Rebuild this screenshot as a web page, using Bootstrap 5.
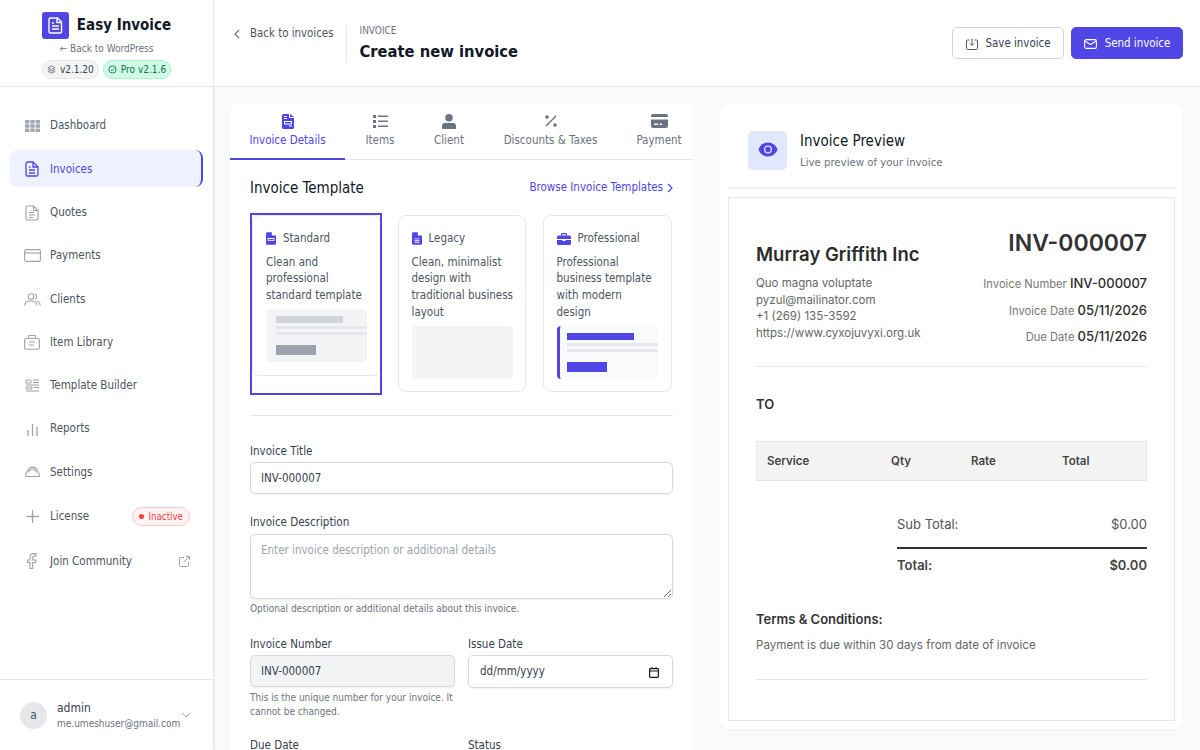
<!DOCTYPE html>
<html lang="en"><head><meta charset="utf-8"><title>Create new invoice</title>
<link href="https://cdn.jsdelivr.net/npm/bootstrap@5.3.0/dist/css/bootstrap.min.css" rel="stylesheet">
<style>
html,body{height:750px;overflow:hidden}
body{font-family:"DejaVu Sans Condensed","DejaVu Sans",sans-serif;background:#f9fafb;color:#111827;font-size:11.5px}
svg{display:block;flex:none}
.app-side{width:214px;height:750px;background:#fff;border-right:1px solid #e5e7eb;box-shadow:1px 0 2px rgba(0,0,0,.04)}
.brand-box{height:87px;border-bottom:1px solid #e5e7eb;padding-top:11px}
.logo-sq{width:27px;height:27px;background:#4f46e5;border-radius:3px}
.brand-name{font-size:15px;font-weight:700;color:#111827;line-height:28px}
.wp-link{font-size:10px;color:#6b7280;line-height:14px;margin-top:3px}
.ver-pill{font-size:10px;line-height:17px;border-radius:9px;padding:0 4px;background:#f3f4f6;border:1px solid #e5e7eb;color:#374151}
.ver-pro{background:#d1fae5;border-color:#a7f3d0;color:#047857}
.side-nav{padding:20px 10px 0}
.side-item{height:37px;margin-bottom:6.3px;padding:1px 13px 0;font-size:11.5px;color:#4b5563;border-radius:8px}
.side-item.on{background:#eef2ff;color:#4f46e5;border-right:2px solid #4f46e5}
.side-ic{width:18px;margin-right:9px;color:#9ca3af}
.side-lic{margin-top:7.300px}
.side-join{margin-top:7.500px}
.off-pill{font-size:9.7px;line-height:17px;color:#ef4444;background:#fef2f2;border:1px solid #fecaca;border-radius:10px;padding:0 6px}
.off-dot{width:5px;height:5px;border-radius:50%;background:#ef4444}
.user-box{height:71px;border-top:1px solid #e5e7eb;padding:0 22px 0 20px}
.user-ava{width:27px;height:27px;border-radius:50%;background:#e5e7eb;color:#4b5563;font-size:12px;margin-right:10px}
.user-txt{padding-top:2px}
.user-nm{font-size:12px;color:#374151;line-height:15px}
.user-ml{font-size:10px;color:#6b7280;line-height:15px;white-space:nowrap}
.top-head{height:87px;background:#fff;border-bottom:1px solid #e5e7eb;padding:0 17px 0 20px}
.back-lnk{font-size:11.4px;color:#4b5563;padding-right:13px;margin-bottom:18px;gap:10px}
.head-sep{height:37px;border-left:1px solid #e5e7eb;margin-right:12px}
.head-sm{font-size:10px;color:#6b7280;line-height:13px;margin-top:2px}
.head-h{font-size:16.400px;font-weight:700;color:#111827;line-height:26px;margin:2px 0 0}
.act-btn{height:32px;width:112px;font-size:11.4px;border-radius:5px;padding:2px 0 0}
.act-save{background:#fff;border:1px solid #d1d5db;color:#374151}
.act-send{background:#4f46e5;border:1px solid #4f46e5;color:#fff;margin-left:7px}
.work{padding:17px 17px 0 16px;gap:27px}
.panel{background:#fff;border-radius:8px;box-shadow:0 1px 2px rgba(0,0,0,.05)}
.form-pan{width:463px;height:700px;overflow:hidden}
.prev-pan{width:463px;height:625px;padding:0 8px}
.tab-row{height:56px;border-bottom:1px solid #e5e7eb}
.tab-it{height:56px;font-size:11.5px;color:#6b7280;padding:9px 0 0;line-height:15px;flex:none}
.tab-ic{height:16px;margin-bottom:4px}
.tab-on{color:#4f46e5;border-bottom:2px solid #4f46e5}
.tw-a{width:115px}.tw-b{width:70px}.tw-c{width:68px}.tw-d{width:135px}.tw-e{width:82px}
.form-in{padding:18px 20px 0}
.sec-row{margin-bottom:15px}
.sec-h{font-size:15px;color:#111827;line-height:20px}
.sec-lnk{font-size:11.5px;color:#4f46e5}
.tpl-row{margin-bottom:20px}
.tpl{border:1px solid #e5e7eb;border-radius:8px;padding:14px 11px 0 12.500px;width:128px;height:177px;font-size:11.5px;line-height:16.7px;color:#4b5563;margin-top:2px}
.tpl-wrap{width:132px;height:182px;outline:2px solid #4f46e5;outline-offset:-2px;padding:2px 1px 0 2px;margin-right:16px}
.tpl-sel{height:161px;width:129px;margin-top:0;padding-left:13px}
.tpl-mid{margin-right:17px}
.tpl-pro{width:129px;padding-right:15px}
.tpl-t{color:#4b5563;margin-bottom:6.5px;line-height:17px;gap:7px}
.thumb{height:53px;width:101px;background:#f3f4f6;border-radius:4px;margin-top:5.5px;padding-top:7px;overflow:hidden}
.thumb-pro{background:#f9fafb;border-left:3px solid #4f46e5}
.bar-a{height:7px;width:67px;margin-left:10px;background:#d1d5db}
.bar-b{height:3px;margin:3px 0 0 10px;background:#e5e7eb}
.bar-c{height:10px;width:40px;margin:10px 0 0 10px;background:#9ca3af}
.thumb-pro .bar-a,.thumb-pro .bar-b,.thumb-pro .bar-c{margin-left:7px}
.thumb-pro .bar-a,.thumb-pro .bar-c{background:#4f46e5}
.rule-x{border-top:1px solid #e5e7eb;margin:0 0 28px}
.fld-lab{font-size:11.5px;color:#374151;line-height:14px;margin-bottom:4px;display:block}
.inp{font-size:11.5px;border:1px solid #d6d9df;border-radius:5px;height:32px;padding:0 10px;color:#374151;width:100%;background:#fff;box-shadow:0 1px 2px rgba(0,0,0,.05)}
.inp::placeholder{color:#9ca3af}
.inp-gap{margin-bottom:21px}
textarea.inp{height:65px;padding:7px 10px;display:block;margin-top:5px}
.inp-dis{background:#f3f4f6}
.inp-date{height:33px;padding:1px 13px 0 11px}
.fld-help{font-size:10px;color:#6b7280;line-height:14px}
.help-a{margin-top:3px}.help-b{margin-top:4px}
.fld-row{column-gap:13px;margin-top:21px}
.fld-row2{margin-top:19px}
.fld-col{width:205px}
.inv-box{border:1px solid #e5e7eb;margin-top:8px;height:524px;padding:0 27px;font-family:Inter,"Liberation Sans",sans-serif}
.prev-head{height:85px;border-bottom:2px solid #f0f1f3;padding:10px 20px 0}
.eye-sq{width:39px;height:39px;background:#e0e7ff;border-radius:5px;margin-right:13px}
.eye-sq svg{margin-bottom:2px}
.prev-t{font-size:15px;color:#111827;line-height:22px}
.prev-s{font-size:11.3px;color:#6b7280;line-height:18px;margin-top:2px}
.co-nm{font-size:18.5px;font-weight:600;color:#2b2b2b;line-height:24px;margin-top:44px}
.co-ln{font-size:11.5px;color:#666;line-height:16.7px;margin-top:9px}
.inv-no{font-size:23px;font-weight:600;color:#333;line-height:30px;text-align:right;margin-top:30px;margin-bottom:17px}
.m-ln{font-size:11.2px;color:#777;text-align:right;line-height:17px;margin-bottom:8.7px}
.m-ln b{font-size:13px;font-weight:500;color:#2b2b2b}
.inv-rule{border-top:1px solid #e5e7eb;margin-top:11px}
.to-h{font-size:13px;font-weight:600;color:#333;margin:29px 0 29px;line-height:16px}
.it-head{height:40px;background:#f4f4f5;border:1px solid #e5e7eb;font-size:11.5px;font-weight:600;color:#444;padding:2px 0 0 10px}
.col-s{width:124px}.col-q{width:80px}.col-r{width:91px}
.tot-w{width:250px;margin:33px 0 0 auto}
.tot-a{font-size:13px;color:#555;height:22px}
.tot-b{border-top:2px solid #333;margin-top:11px;padding-top:7px;font-size:13px;font-weight:600;color:#444}
.terms-h{font-size:13px;font-weight:600;color:#333;margin-top:34px;line-height:18px}
.terms-p{font-size:11.6px;color:#666;margin-top:8px;line-height:18px}
.rule-end{margin-top:25px}
</style></head>
<body>
<div class="d-flex">
<aside class="app-side d-flex flex-column flex-shrink-0">
 <div class="brand-box text-center">
  <div class="d-flex justify-content-center align-items-center gap-2">
   <div class="logo-sq d-flex align-items-center justify-content-center"><svg width="15" height="17" viewBox="0 0 15 17" fill="none" stroke="#fff" stroke-width="1.4"><path d="M2.5 1h7l4 4v9.500a1.500 1.500 0 0 1-1.500 1.500h-9.500a1.500 1.500 0 0 1-1.500-1.500v-12a1.500 1.500 0 0 1 1.500-1.500zM9 1v4.500h4.500M4 9h7M4 12h7M4 6h2"/></svg></div>
   <div class="brand-name">Easy Invoice</div>
  </div>
  <div class="wp-link">← Back to WordPress</div>
  <div class="d-flex justify-content-center gap-1 mt-1">
   <span class="ver-pill d-flex align-items-center gap-1"><svg width="9" height="9" viewBox="0 0 10 10" fill="none" stroke="#6b7280"><path d="M5 1 9 3 5 5 1 3zM1 5l4 2 4-2M1 7l4 2 4-2"/></svg>v2.1.20</span>
   <span class="ver-pill ver-pro d-flex align-items-center gap-1"><svg width="9" height="9" viewBox="0 0 10 10" fill="none" stroke="#047857"><circle cx="5" cy="5" r="4"/><path d="m3.200 5 1.300 1.300 2.300-2.500"/></svg>Pro v2.1.6</span>
  </div>
 </div>
 <nav class="side-nav flex-grow-1">
  <div class="side-item d-flex align-items-center"><span class="side-ic d-flex justify-content-center"><svg width="15" height="12" viewBox="0 0 15 12" fill="#a3a9b3"><rect width="4.400" height="3.600" rx=".6"/><rect x="5.300" width="4.400" height="3.600"/><rect x="10.600" width="4.400" height="3.600" rx=".6"/><rect y="4.200" width="4.400" height="3.600"/><rect x="5.300" y="4.200" width="4.400" height="3.600"/><rect x="10.600" y="4.200" width="4.400" height="3.600"/><rect y="8.400" width="4.400" height="3.600" rx=".6"/><rect x="5.300" y="8.400" width="4.400" height="3.600"/><rect x="10.600" y="8.400" width="4.400" height="3.600" rx=".6"/></svg></span>Dashboard</div>
  <div class="side-item on d-flex align-items-center"><span class="side-ic d-flex justify-content-center"><svg width="14" height="16" viewBox="0 0 14 16" fill="none" stroke="#4f46e5" stroke-width="1.300"><path d="M2.500 1h5.500l5 5v7.500a1.500 1.500 0 0 1-1.500 1.500h-9a1.500 1.500 0 0 1-1.500-1.500v-11a1.500 1.500 0 0 1 1.500-1.500zM8 1v5h5M4 9h6M4 12h6M4 6h1.500"/></svg></span>Invoices</div>
  <div class="side-item d-flex align-items-center"><span class="side-ic d-flex justify-content-center"><svg width="14" height="16" viewBox="0 0 14 16" fill="none" stroke="#9ca3af" stroke-width="1.100"><path d="M2.500 1h6l4.500 4.500v8a1.500 1.500 0 0 1-1.500 1.500h-9a1.500 1.500 0 0 1-1.500-1.500v-11a1.500 1.500 0 0 1 1.500-1.500zM8.500 1v4.500h4.500M4 7.500h5M4 10h6M4 12.500h4"/></svg></span>Quotes</div>
  <div class="side-item d-flex align-items-center"><span class="side-ic d-flex justify-content-center"><svg width="17" height="13" viewBox="0 0 17 13" fill="none" stroke="#9ca3af" stroke-width="1.100"><rect x=".6" y=".6" width="15.800" height="11.800" rx="1.500"/><path d="M.6 4h15.800"/></svg></span>Payments</div>
  <div class="side-item d-flex align-items-center"><span class="side-ic d-flex justify-content-center"><svg width="17" height="13" viewBox="0 0 17 13" fill="none" stroke="#9ca3af" stroke-width="1.100"><circle cx="7" cy="3.500" r="2.800"/><path d="M.6 12.500c0-3 2-4.500 6.400-4.500s6 1.500 6 4.500M11 .9a2.800 2.800 0 0 1 0 5.200M13 8c2 .5 3.200 2 3.200 4.500"/></svg></span>Clients</div>
  <div class="side-item d-flex align-items-center"><span class="side-ic d-flex justify-content-center"><svg width="16" height="15" viewBox="0 0 16 15" fill="none" stroke="#9ca3af" stroke-width="1.100"><rect x=".6" y="3.500" width="14.800" height="10.800" rx="1.500"/><path d="M4.500 3.500V1.500a1 1 0 0 1 1-1h5a1 1 0 0 1 1 1v2M5 7h6M5 10h5"/></svg></span>Item Library</div>
  <div class="side-item d-flex align-items-center"><span class="side-ic d-flex justify-content-center"><svg width="15" height="14" viewBox="0 0 15 14" fill="none" stroke="#9ca3af"><path d="M1 1h5v3H1zM8 1h6M8 3.500h6M1 6h13M1 8h6v2H1zM9 8.500h5M1 12h13"/></svg></span>Template Builder</div>
  <div class="side-item d-flex align-items-center"><span class="side-ic d-flex justify-content-center"><svg width="15" height="13" viewBox="0 0 15 13" fill="none" stroke="#9ca3af" stroke-width="1.300"><path d="M3 13V7M7.500 13V1M12 13V4"/></svg></span>Reports</div>
  <div class="side-item d-flex align-items-center"><span class="side-ic d-flex justify-content-center"><svg width="15" height="12" viewBox="0 0 15 12" fill="none" stroke="#9ca3af" stroke-width="1.100"><path d="M1 10.500h13c.5-.5.5-1.500 0-2.500L11.500 3C10 .5 5 .5 3.500 3L1 8c-.5 1-.5 2 0 2.500zM4 6.500a3.500 3.500 0 0 1 7 0"/></svg></span>Settings</div>
  <div class="side-item side-lic d-flex align-items-center"><span class="side-ic d-flex justify-content-center"><svg width="15" height="15" viewBox="0 0 15 15" fill="#9ca3af"><path d="M7 1h1l.3 5.700 5.700.3v1l-5.700.3L8 14H7l-.3-5.700L1 8V7l5.700-.3z"/></svg></span>License<span class="off-pill d-flex align-items-center gap-1 ms-auto"><i class="off-dot"></i>Inactive</span></div>
  <div class="side-item side-join d-flex align-items-center"><span class="side-ic d-flex justify-content-center"><svg width="12" height="16" viewBox="0 0 12 16" fill="none" stroke="#9ca3af" stroke-width="1.100"><path d="M4 15.500V9.500H1.500V7H4V4.500C4 2 5.500 .6 7.500 .6h2.500V3H8C7 3 6.700 3.500 6.700 4.500V7H10l-.5 2.500H6.700v6z"/></svg></span>Join Community<svg class="ms-auto" width="11" height="11" viewBox="0 0 11 11" fill="none" stroke="#9ca3af"><path d="M5 1.500H1.500a1 1 0 0 0-1 1v7a1 1 0 0 0 1 1h7a1 1 0 0 0 1-1V6M4.500 6.500 10.500.5M7 .5h3.500V4"/></svg></div>
 </nav>
 <div class="user-box d-flex align-items-center">
  <div class="user-ava flex-shrink-0 d-flex align-items-center justify-content-center">a</div>
  <div class="user-txt flex-grow-1"><div class="user-nm">admin</div><div class="user-ml">me.umeshuser@gmail.com</div></div>
  <svg width="10" height="6" viewBox="0 0 10 6" fill="none" stroke="#9ca3af"><path d="m1 1 4 4 4-4"/></svg>
 </div>
</aside>
<main class="flex-grow-1">
 <header class="top-head d-flex align-items-center">
  <div class="back-lnk d-flex align-items-center"><svg width="6" height="10" viewBox="0 0 6 10" fill="none" stroke="#6b7280" stroke-width="1.200"><path d="M5 1 1 5l4 4"/></svg>Back to invoices</div>
  <div class="head-sep"></div>
  <div><div class="head-sm">INVOICE</div><h1 class="head-h">Create new invoice</h1></div>
  <button class="btn act-btn act-save d-flex align-items-center justify-content-center gap-2 ms-auto"><svg width="12" height="12" viewBox="0 0 12 12" fill="none" stroke="#4b5563"><path d="M3.500 2H1.500a1 1 0 0 0-1 1v7.500a1 1 0 0 0 1 1h9a1 1 0 0 0 1-1V3a1 1 0 0 0-1-1H8.500M6 .5V7M4 5.500l2 2 2-2"/></svg>Save invoice</button>
  <button class="btn act-btn act-send d-flex align-items-center justify-content-center gap-2"><svg width="13" height="10" viewBox="0 0 13 10" fill="none" stroke="#fff" stroke-width="1.100"><rect x=".6" y=".6" width="11.800" height="8.800" rx="1.500"/><path d="m.8 2 5.700 3.500L12.200 2"/></svg>Send invoice</button>
 </header>
 <div class="work d-flex align-items-start">
  <section class="panel form-pan">
   <div class="tab-row d-flex">
    <div class="tab-it tab-on tw-a text-center"><div class="tab-ic d-flex align-items-center justify-content-center"><svg width="12" height="15" viewBox="0 0 12 15" fill="#4f46e5"><path d="M1.500 0H7v4h5v9.500a1.500 1.500 0 0 1-1.500 1.500h-9A1.500 1.500 0 0 1 0 13.500v-12A1.500 1.500 0 0 1 1.500 0zM8 0l4 3H8zM2 2v1h3V2zm0 2v1h3V4zm0 3v3.500h8V7zm1 1h6v1.500H3zm4 3.500v1h3v-1z" fill-rule="evenodd"/></svg></div>Invoice Details</div>
    <div class="tab-it tw-b text-center"><div class="tab-ic d-flex align-items-center justify-content-center"><svg width="15" height="13" viewBox="0 0 15 13" fill="#6b7280"><path d="M0 0h3v3H0zM5 .5h10V2H5zM0 5h3v3H0zM5 5.500h10V7H5zM0 10h3v3H0zM5 10.500h10V12H5z"/></svg></div>Items</div>
    <div class="tab-it tw-c text-center"><div class="tab-ic d-flex align-items-center justify-content-center"><svg width="14" height="15" viewBox="0 0 14 15" fill="#6b7280"><circle cx="7" cy="3.800" r="3.800"/><path d="M3 9h8a3 3 0 0 1 3 3v3H0v-3a3 3 0 0 1 3-3z"/></svg></div>Client</div>
    <div class="tab-it tw-d text-center"><div class="tab-ic d-flex align-items-center justify-content-center"><svg width="12" height="12" viewBox="0 0 12 12" fill="#6b7280"><circle cx="2" cy="2" r="1.800"/><circle cx="10" cy="10" r="1.800"/><path d="M10.500.5l1 1-10 10-1-1z"/></svg></div>Discounts &amp; Taxes</div>
    <div class="tab-it tw-e text-center"><div class="tab-ic d-flex align-items-center justify-content-center"><svg width="17" height="14" viewBox="0 0 17 14" fill="#6b7280"><path d="M2 0h13a2 2 0 0 1 2 2v1H0V2a2 2 0 0 1 2-2zM0 5.500h17V12a2 2 0 0 1-2 2H2a2 2 0 0 1-2-2zM3 9.500V11h4V9.500zm5.500 0V11H11V9.500z" fill-rule="evenodd"/></svg></div>Payment</div>
   </div>
   <div class="form-in">
    <div class="sec-row d-flex justify-content-between align-items-center"><div class="sec-h">Invoice Template</div><div class="sec-lnk d-flex align-items-center gap-1">Browse Invoice Templates <svg width="6" height="10" viewBox="0 0 6 10" fill="none" stroke="#4f46e5" stroke-width="1.200"><path d="m1 1 4 4-4 4"/></svg></div></div>
    <div class="d-flex tpl-row">
     <div class="tpl-wrap flex-shrink-0"><div class="tpl tpl-sel"><div class="tpl-t d-flex align-items-center"><svg width="10" height="13" viewBox="0 0 12 15" fill="#4f46e5"><path d="M1.500 0H7v4h5v9.500a1.500 1.500 0 0 1-1.500 1.500h-9A1.500 1.500 0 0 1 0 13.500v-12A1.500 1.500 0 0 1 1.500 0zM2 7v3.500h8V7zm1 1h6v1.500H3z" fill-rule="evenodd"/></svg>Standard</div>Clean and professional standard template<div class="thumb"><div class="bar-a"></div><div class="bar-b"></div><div class="bar-b"></div><div class="bar-c"></div></div></div></div>
     <div class="tpl tpl-mid flex-shrink-0"><div class="tpl-t d-flex align-items-center"><svg width="10" height="13" viewBox="0 0 12 15" fill="#4f46e5"><path d="M1.500 0H7v4h5v9.500a1.500 1.500 0 0 1-1.500 1.500h-9A1.500 1.500 0 0 1 0 13.500v-12A1.500 1.500 0 0 1 1.500 0zM3 7.500v1h6v-1zm0 2v1h6v-1zm0 2v1h6v-1z" fill-rule="evenodd"/></svg>Legacy</div>Clean, minimalist design with traditional business layout<div class="thumb"></div></div>
     <div class="tpl tpl-pro flex-shrink-0"><div class="tpl-t d-flex align-items-center"><svg width="14" height="12" viewBox="0 0 14 12" fill="#4f46e5"><path d="M4 2.500V1a1 1 0 0 1 1-1h4a1 1 0 0 1 1 1v1.500h2.500A1.500 1.500 0 0 1 14 4v2H0V4a1.500 1.500 0 0 1 1.500-1.500zM5.200 1.200v1.300h3.600V1.200zM0 7h5.500v1h3V7H14v3.500a1.500 1.500 0 0 1-1.500 1.500h-11A1.500 1.500 0 0 1 0 10.500z" fill-rule="evenodd"/></svg>Professional</div>Professional business template with modern design<div class="thumb thumb-pro"><div class="bar-a"></div><div class="bar-b"></div><div class="bar-b"></div><div class="bar-c"></div></div></div>
    </div>
    <div class="rule-x"></div>
    <label class="fld-lab">Invoice Title</label>
    <input class="inp inp-gap form-control" value="INV-000007">
    <label class="fld-lab">Invoice Description</label>
    <textarea class="inp form-control" placeholder="Enter invoice description or additional details"></textarea>
    <div class="fld-help help-a">Optional description or additional details about this invoice.</div>
    <div class="d-flex fld-row">
     <div class="fld-col"><label class="fld-lab">Invoice Number</label><input class="inp inp-dis form-control" value="INV-000007" readonly><div class="fld-help help-b">This is the unique number for your invoice. It cannot be changed.</div></div>
     <div class="fld-col"><label class="fld-lab">Issue Date</label><div class="inp inp-date d-flex align-items-center justify-content-between">dd/mm/yyyy<svg width="10" height="11" viewBox="0 0 10 11" fill="none" stroke="#111827" stroke-width="1.200"><rect x=".6" y="1.600" width="8.800" height="8.800" rx=".8"/><path d="M.6 4h8.800M3 .2v1.500M7 .2v1.500" /></svg></div></div>
    </div>
    <div class="d-flex fld-row fld-row2">
     <div class="fld-col"><label class="fld-lab">Due Date</label></div>
     <div class="fld-col"><label class="fld-lab">Status</label></div>
    </div>
   </div>
  </section>
  <section class="panel prev-pan">
   <div class="prev-head d-flex align-items-center"><div class="eye-sq d-flex align-items-center justify-content-center"><svg width="20" height="15" viewBox="0 0 20 15"><path fill="#4f46e5" d="M10 .5c4.500 0 8 3 9.500 7-1.500 4-5 7-9.500 7s-8-3-9.500-7C2 3.500 5.500.5 10 .5z"/><circle cx="10" cy="7.500" r="4" fill="#e0e7ff"/><circle cx="10" cy="7.500" r="2.700" fill="#4f46e5"/></svg></div><div><div class="prev-t">Invoice Preview</div><div class="prev-s">Live preview of your invoice</div></div></div>
   <div class="inv-box">
    <div class="d-flex justify-content-between">
     <div><div class="co-nm">Murray Griffith Inc</div><div class="co-ln">Quo magna voluptate<br>pyzul@mailinator.com<br>+1 (269) 135-3592<br>https://www.cyxojuvyxi.org.uk</div></div>
     <div><div class="inv-no">INV-000007</div><div class="m-ln">Invoice Number <b>INV-000007</b></div><div class="m-ln">Invoice Date <b>05/11/2026</b></div><div class="m-ln">Due Date <b>05/11/2026</b></div></div>
    </div>
    <div class="inv-rule"></div>
    <div class="to-h">TO</div>
    <div class="it-head d-flex align-items-center"><span class="col-s">Service</span><span class="col-q">Qty</span><span class="col-r">Rate</span><span>Total</span></div>
    <div class="tot-w"><div class="tot-a d-flex justify-content-between align-items-center"><span>Sub Total:</span><span>$0.00</span></div><div class="tot-b d-flex justify-content-between"><span>Total:</span><span>$0.00</span></div></div>
    <div class="terms-h">Terms &amp; Conditions:</div>
    <div class="terms-p">Payment is due within 30 days from date of invoice</div>
    <div class="inv-rule rule-end"></div>
   </div>
  </section>
 </div>
</main>
</div>
<script src="https://cdn.jsdelivr.net/npm/bootstrap@5.3.0/dist/js/bootstrap.bundle.min.js"></script>
</body></html>
